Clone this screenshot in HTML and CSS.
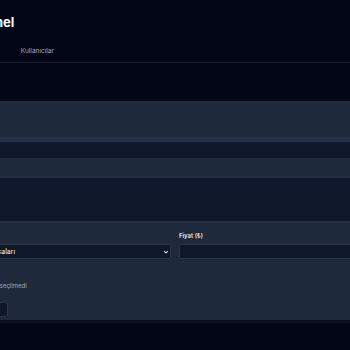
FILE: index.html
```html
<!DOCTYPE html>
<html lang="tr">
<head>
    <meta charset="UTF-8">
    <meta name="viewport" content="width=device-width, initial-scale=1.0">
    <title>Admin Panel</title>
    <link rel="stylesheet" href="styles.css">
</head>
<body>

    <div class="page">
        <header class="top">
            <h1 class="title">Admin Panel</h1>
            <nav class="tabs">
                <a href="#" class="tab">Ürünler</a>
                <a href="#" class="tab">Kullanıcılar</a>
            </nav>
        </header>

        <main class="content">
            <section class="card">
                <div class="card-head"></div>
                <div class="band"></div>
                <div class="row row-dark"></div>
                <div class="row row-light"></div>
                <div class="band band-thin"></div>
                <div class="row row-dark row-tall"></div>
                <div class="band band-thin"></div>

                <form class="form">
                    <div class="fields">
                        <div class="field">
                            <label class="label">Kategori</label>
                            <div class="select-wrap">
                                <select class="select">
                                    <option>Bilgisayar Kasaları</option>
                                </select>
                                <svg class="chevron" width="6" height="6" viewBox="0 0 10 10">
                                    <path d="M2 3.5 L5 6.5 L8 3.5" fill="none" stroke="#cbd5e1" stroke-width="1.8"/>
                                </svg>
                            </div>
                        </div>
                        <div class="field">
                            <label class="label">Fiyat (₺)</label>
                            <input class="input" type="text">
                        </div>
                    </div>

                    <div class="file-row">
                        <span class="file-btn">Dosya Seç</span>
                        <span class="file-text">Dosya seçilmedi</span>
                    </div>

                    <button type="button" class="submit">Kaydet</button>
                </form>
            </section>
        </main>
    </div>

</body>
</html>
```

FILE: styles.css
```css
* {
    box-sizing: border-box;
}

html, body {
    margin: 0;
    height: 100%;
    overflow: hidden;
    background-color: #020617;
    font-family: Inter, "Noto Sans", sans-serif;
    color: #e2e8f0;
}

.page {
    margin-left: -120px;
    width: 640px;
}

.top {
    padding: 12px 0 6px 55px;
    border-bottom: 1px solid #1a2030;
}

.title {
    margin: 0;
    font-size: 13px;
    line-height: 20px;
    font-weight: 700;
    color: #ffffff;
}

.tabs {
    display: flex;
    gap: 36px;
    margin-top: 14px;
    padding-left: 27px;
}

.tab {
    font-size: 6.5px;
    line-height: 10px;
    color: #a3acbb;
    text-decoration: none;
}

.content {
    padding-top: 38px;
}

.card {
    background-color: #1e293b;
    border-bottom: 3px solid #0b1222;
}

.card-head {
    height: 36px;
    border-top: 1px solid #232e42;
}

.band {
    height: 5px;
    background-color: #243046;
}

.band-thin {
    height: 2px;
}

.row {
    height: 16px;
}

.row-dark {
    background-color: #0f172a;
}

.row-light {
    height: 18px;
    background-color: #1e293b;
}

.row-tall {
    height: 43px;
}

.form {
    padding: 9px 16px 3px 49px;
}

.fields {
    display: grid;
    grid-template-columns: 242px 1fr;
    gap: 8px;
}

.field {
    display: flex;
    flex-direction: column;
}

.label {
    font-size: 6px;
    line-height: 8px;
    font-weight: 600;
    color: #e2e8f0;
    margin-bottom: 4px;
}

.select-wrap {
    position: relative;
}

.select {
    display: block;
    appearance: none;
    width: 100%;
    height: 15px;
    padding: 0 4px 0 25px;
    font-family: inherit;
    font-size: 7px;
    color: #f1f5f9;
    background-color: #0f172a;
    border: 1px solid #2a3548;
    border-radius: 2px;
}

.chevron {
    position: absolute;
    right: 2px;
    top: 5px;
}

.input {
    display: block;
    height: 15px;
    background-color: #0f172a;
    border: 1px solid #2a3548;
    border-radius: 2px;
}

.file-row {
    display: flex;
    align-items: center;
    gap: 4px;
    margin-top: 22px;
    padding-left: 9px;
    font-size: 6px;
    line-height: 8px;
    color: #a3acbb;
}

.file-btn {
    padding: 1px 4px;
    background-color: #334155;
    border-radius: 2px;
}

.submit {
    display: block;
    margin-top: 11px;
    width: 79px;
    height: 15px;
    font-family: inherit;
    font-size: 6px;
    color: #ffffff;
    background-color: #0f172a;
    border: 1px solid #2a3548;
    border-radius: 2px;
}
```
